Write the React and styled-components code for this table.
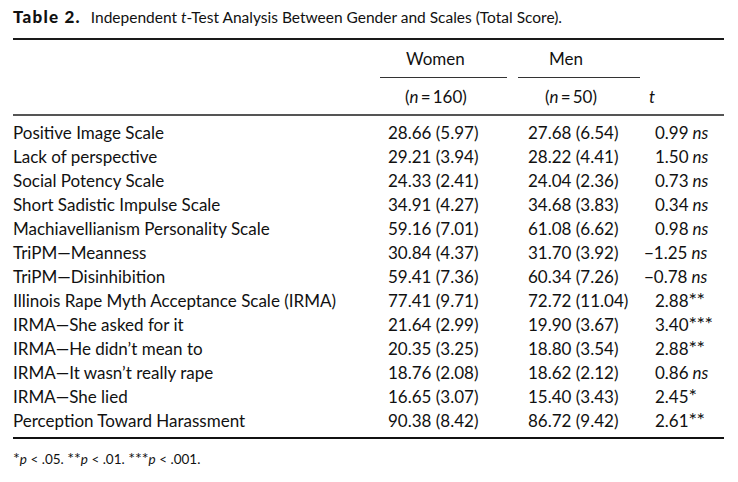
import React from "react";
import styled, { createGlobalStyle } from "styled-components";

const Global = createGlobalStyle`
  html, body { margin: 0; padding: 0; background: #fff; }
  body { font-family: Lato, "Open Sans", sans-serif; color: #111; }
`;

const Page = styled.div`
  width: 711px;
  padding: 0 14px 0 13px;
`;

const Caption = styled.div`
  font-size: 15.5px;
  line-height: 20px;
  padding-top: 7px;
  height: 38px;
  box-sizing: border-box;
  white-space: nowrap;
`;

const CaptionLabel = styled.b`
  font-size: 17px;
  font-weight: 900;
  letter-spacing: 1.2px;
  margin-right: 6px;
`;

const Table = styled.div`
  display: grid;
  grid-template-columns: 367px 138px 122px 84px;
  border-top: 2px solid #1a1a1a;
  font-size: 17px;
`;

const HeadCell = styled.div`
  height: ${p => p.$h}px;
  display: flex;
  align-items: center;
  padding-left: ${p => p.$indent || 0}px;
  box-sizing: border-box;
  margin-right: ${p => p.$gap || 0}px;
  border-bottom: ${p => (p.$line ? "1px solid #333" : "none")};
  font-style: ${p => (p.$italic ? "italic" : "normal")};
  white-space: nowrap;
`;

const HeadRule = styled.div`
  grid-column: 1 / -1;
  border-top: 2px solid #555;
  height: 4px;
`;

const Cell = styled.div`
  height: 24px;
  display: flex;
  align-items: center;
  padding-left: ${p => p.$indent || 0}px;
  white-space: nowrap;
  font-variant-numeric: tabular-nums;
`;

const TValue = styled.span`
  margin-left: ${p => (p.$neg ? "-11px" : "0")};
  i { font-style: italic; }
`;

const Stars = styled.span`
  font-size: 20px;
  line-height: 0;
  letter-spacing: -0.5px;
`;

const BottomRule = styled.div`
  grid-column: 1 / -1;
  height: 5px;
  border-bottom: 2px solid #111;
`;

const Note = styled.div`
  font-size: 13.5px;
  line-height: 18px;
  padding-top: 11px;
  white-space: nowrap;
  i { font-style: italic; }
`;

const NoteStars = styled.span`
  font-size: 16px;
  line-height: 0;
`;

const rows = [
  ["Positive Image Scale", "28.66 (5.97)", "27.68 (6.54)", "0.99", " ns"],
  ["Lack of perspective", "29.21 (3.94)", "28.22 (4.41)", "1.50", " ns"],
  ["Social Potency Scale", "24.33 (2.41)", "24.04 (2.36)", "0.73", " ns"],
  ["Short Sadistic Impulse Scale", "34.91 (4.27)", "34.68 (3.83)", "0.34", " ns"],
  ["Machiavellianism Personality Scale", "59.16 (7.01)", "61.08 (6.62)", "0.98", " ns"],
  ["TriPM\u2014Meanness", "30.84 (4.37)", "31.70 (3.92)", "\u22121.25", " ns"],
  ["TriPM\u2014Disinhibition", "59.41 (7.36)", "60.34 (7.26)", "\u22120.78", " ns"],
  ["Illinois Rape Myth Acceptance Scale (IRMA)", "77.41 (9.71)", "72.72 (11.04)", "2.88", "**"],
  ["IRMA\u2014She asked for it", "21.64 (2.99)", "19.90 (3.67)", "3.40", "***"],
  ["IRMA\u2014He didn\u2019t mean to", "20.35 (3.25)", "18.80 (3.54)", "2.88", "**"],
  ["IRMA\u2014It wasn\u2019t really rape", "18.76 (2.08)", "18.62 (2.12)", "0.86", " ns"],
  ["IRMA\u2014She lied", "16.65 (3.07)", "15.40 (3.43)", "2.45", "*"],
  ["Perception Toward Harassment", "90.38 (8.42)", "86.72 (9.42)", "2.61", "**"],
];

export default function App() {
  return (
    <Page>
      <Global />
      <Caption>
        <CaptionLabel>Table 2.</CaptionLabel> Independent <i>t</i>-Test Analysis Between Gender and Scales (Total Score).
      </Caption>
      <Table>
        <HeadCell $h={38} />
        <HeadCell $h={38} $indent={26} $gap={11} $line>Women</HeadCell>
        <HeadCell $h={38} $indent={31} $line>Men</HeadCell>
        <HeadCell $h={38} />

        <HeadCell $h={36} />
        <HeadCell $h={36} $indent={25}>(<i>n</i>&thinsp;=&thinsp;160)</HeadCell>
        <HeadCell $h={36} $indent={27}>(<i>n</i>&thinsp;=&thinsp;50)</HeadCell>
        <HeadCell $h={36} $indent={9} $italic>t</HeadCell>
        <HeadRule />

        {rows.map(([label, w, m, t, sig]) => (
          <React.Fragment key={label}>
            <Cell>{label}</Cell>
            <Cell $indent={8}>{w}</Cell>
            <Cell $indent={10}>{m}</Cell>
            <Cell $indent={15}>
              <TValue $neg={t.startsWith("\u2212")}>
                {t}
                {sig.trim() === "ns" ? <i>{sig}</i> : <Stars>{sig}</Stars>}
              </TValue>
            </Cell>
          </React.Fragment>
        ))}
        <BottomRule />
      </Table>
      <Note>
        <NoteStars>*</NoteStars><i>p</i> &lt; .05. <NoteStars>**</NoteStars><i>p</i> &lt; .01.{" "}
        <NoteStars>***</NoteStars><i>p</i> &lt; .001.
      </Note>
    </Page>
  );
}
